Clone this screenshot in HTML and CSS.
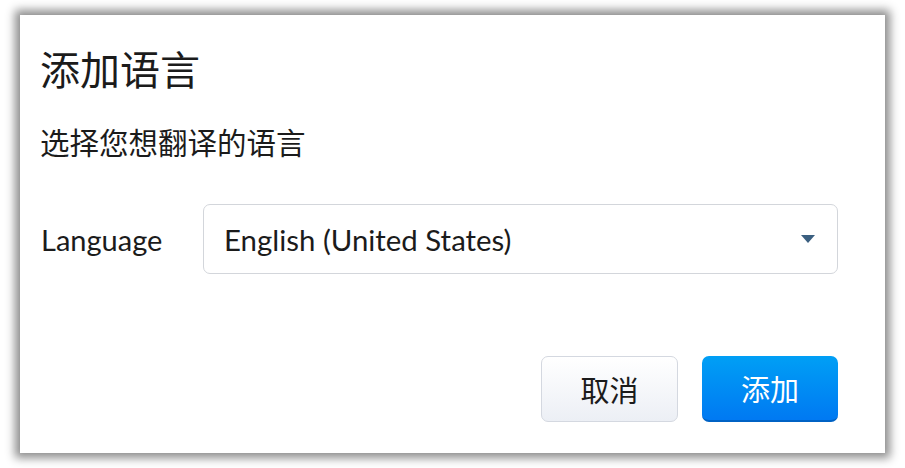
FILE: index.html
```html
<!DOCTYPE html>
<html lang="zh">
<head>
<meta charset="utf-8">
<link rel="stylesheet" href="styles.css">
<title>添加语言</title>
</head>
<body>
<div class="dialog">
  <h1 class="title">添加语言</h1>
  <p class="subtitle">选择您想翻译的语言</p>
  <div class="field">
    <label class="label">Language</label>
    <div class="select">
      <span class="value">English (United States)</span>
      <span class="arrow"></span>
    </div>
  </div>
  <div class="actions">
    <button class="btn btn-cancel">取消</button>
    <button class="btn btn-primary">添加</button>
  </div>
</div>
</body>
</html>
```
FILE: styles.css
```css
html, body {
  margin: 0;
  padding: 0;
  background: #ffffff;
}
body {
  width: 905px;
  height: 468px;
  padding: 15px 20px 0 20px;
  box-sizing: border-box;
  font-family: Lato, "Noto Sans CJK SC", sans-serif;
  color: #1b1b1b;
}
.dialog {
  width: 865px;
  height: 438px;
  box-sizing: border-box;
  background: #ffffff;
  box-shadow: 0 0 9px 5px rgba(0, 0, 0, 0.45);
  padding: 29px 47px 0 20px;
  display: flex;
  flex-direction: column;
}
.title {
  margin: 0;
  font-family: "Noto Sans CJK SC", sans-serif;
  font-weight: 400;
  font-size: 40px;
  line-height: 48px;
  height: 48px;
}
.subtitle {
  margin: 31px 0 0 0;
  font-family: "Noto Sans CJK SC", sans-serif;
  font-size: 29.5px;
  line-height: 36px;
  height: 36px;
}
.field {
  margin-top: 45px;
  display: flex;
  align-items: center;
  height: 70px;
}
.label {
  width: 163px;
  flex: none;
  font-size: 29px;
  padding-left: 1px;
  box-sizing: border-box;
}
.select {
  flex: 1;
  height: 70px;
  box-sizing: border-box;
  border: 1px solid #d3d6db;
  border-radius: 7px;
  display: flex;
  align-items: center;
  justify-content: space-between;
  padding: 0 22px 0 20px;
}
.value {
  font-size: 29.4px;
}
.arrow {
  width: 0;
  height: 0;
  border-left: 7px solid transparent;
  border-right: 7px solid transparent;
  border-top: 8px solid #3b5f80;
}
.actions {
  margin-top: 82px;
  display: flex;
  justify-content: flex-end;
  gap: 24px;
}
.btn {
  height: 66px;
  width: 137px;
  box-sizing: border-box;
  border-radius: 7px;
  font-family: "Noto Sans CJK SC", sans-serif;
  font-size: 29px;
  padding: 0;
  cursor: pointer;
}
.btn-cancel {
  background: linear-gradient(#ffffff, #eceff5);
  border: 1px solid #d4d8e0;
  color: #1b1b1b;
}
.btn-primary {
  width: 136px;
  background: linear-gradient(#009ff5, #0079f2);
  border: none;
  border-bottom: 2px solid #0062c4;
  color: #ffffff;
}
```
